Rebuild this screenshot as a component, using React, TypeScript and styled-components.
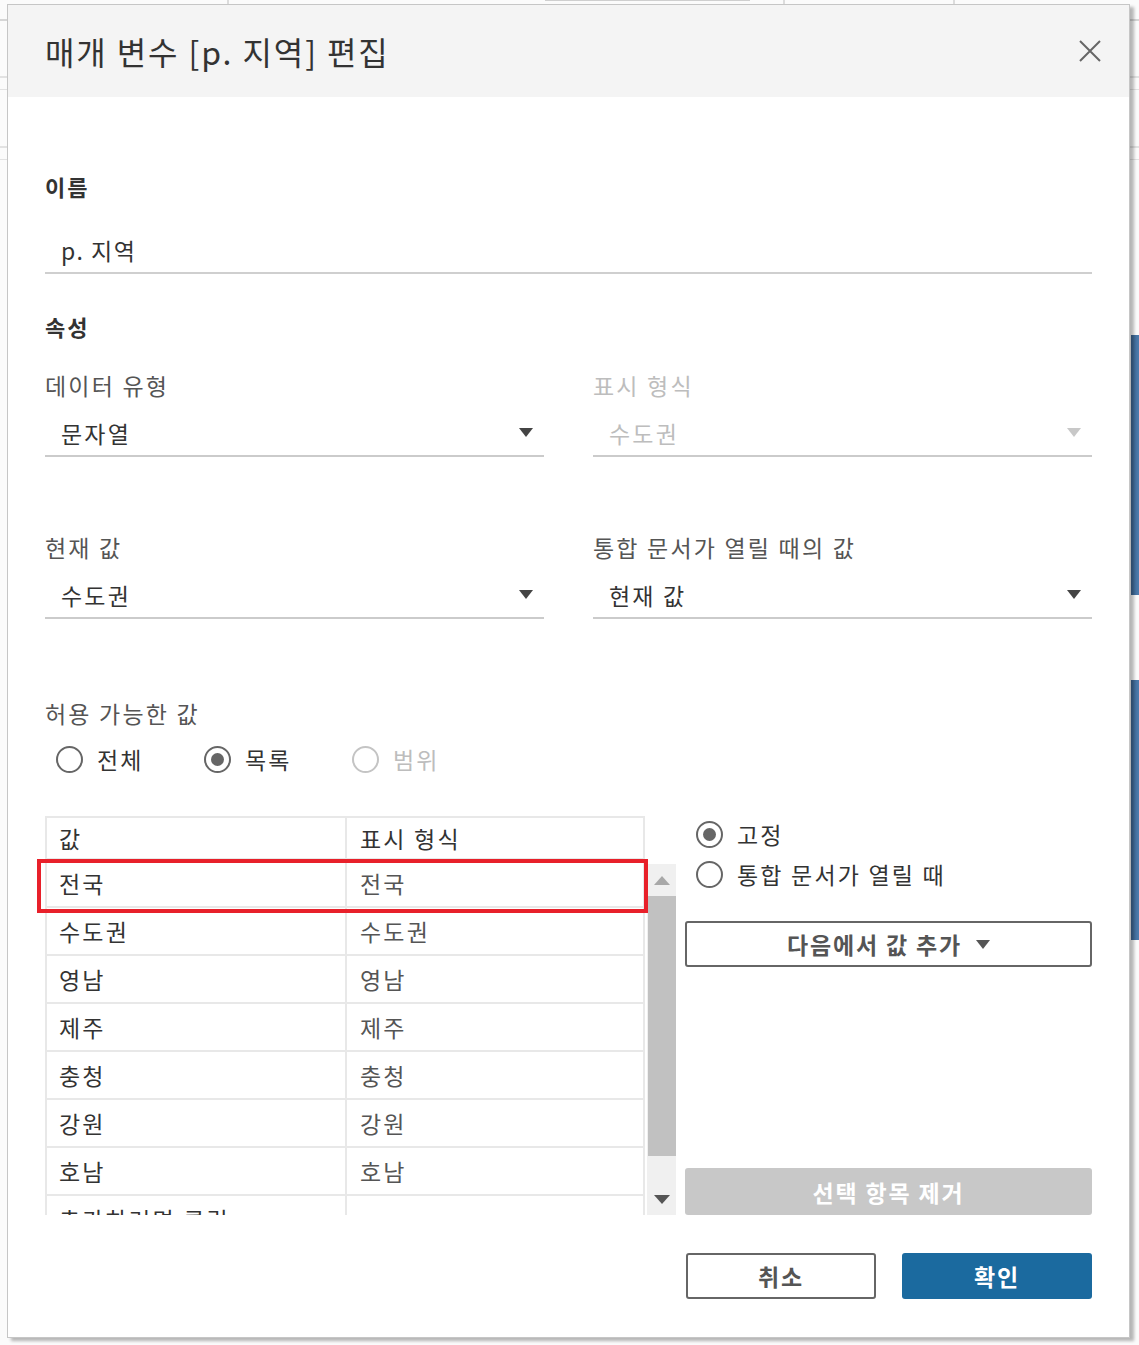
import React from "react";
import styled, { createGlobalStyle } from "styled-components";

const GlobalStyle = createGlobalStyle`
  html, body {
    margin: 0;
    padding: 0;
  }
  body {
    font-family: "Noto Sans CJK KR", "Noto Sans", sans-serif;
    color: #333;
  }
`;

const rows = ["전국", "수도권", "영남", "제주", "충청", "강원", "호남"];

const Caret = ({ color = "#444" }: { color?: string }) => (
  <svg width="14" height="9" viewBox="0 0 14 9">
    <polygon points="0,0 14,0 7,9" fill={color} />
  </svg>
);

const App = () => {
  return (
    <Page>
      <GlobalStyle />
      <Dialog>
        <Header>
          <Title>매개 변수 [p. 지역] 편집</Title>
          <CloseBtn aria-label="닫기">
            <svg width="22" height="22" viewBox="0 0 22 22">
              <path d="M1 1 L21 21 M21 1 L1 21" stroke="#666" strokeWidth="2" fill="none" />
            </svg>
          </CloseBtn>
        </Header>
        <Body>
          <SectionTitle $top={74}>이름</SectionTitle>
          <TextInput>p. 지역</TextInput>

          <SectionTitle $top={37}>속성</SectionTitle>
          <TwoCol $top={29}>
            <Field>
              <FieldLabel>데이터 유형</FieldLabel>
              <Select>
                <span>문자열</span>
                <Caret />
              </Select>
            </Field>
            <Field>
              <FieldLabel $disabled>표시 형식</FieldLabel>
              <Select $disabled>
                <span>수도권</span>
                <Caret color="#c8c8c8" />
              </Select>
            </Field>
          </TwoCol>
          <TwoCol $top={75}>
            <Field>
              <FieldLabel>현재 값</FieldLabel>
              <Select>
                <span>수도권</span>
                <Caret />
              </Select>
            </Field>
            <Field>
              <FieldLabel>통합 문서가 열릴 때의 값</FieldLabel>
              <Select>
                <span>현재 값</span>
                <Caret />
              </Select>
            </Field>
          </TwoCol>

          <FieldLabel $top={79}>허용 가능한 값</FieldLabel>
          <RadioRow>
            <RadioOpt $width={148}>
              <RadioDot />
              전체
            </RadioOpt>
            <RadioOpt $width={148}>
              <RadioDot $checked />
              목록
            </RadioOpt>
            <RadioOpt $disabled>
              <RadioDot $disabled />
              범위
            </RadioOpt>
          </RadioRow>

          <ListArea>
            <TableWrap>
              <TableFrame>
                <HeadRow>
                  <Cell>값</Cell>
                  <Cell $second>표시 형식</Cell>
                </HeadRow>
                {rows.map((r) => (
                  <Row key={r}>
                    <Cell>{r}</Cell>
                    <Cell $second $muted>
                      {r}
                    </Cell>
                  </Row>
                ))}
                <Row>
                  <Cell>추가하려면 클릭</Cell>
                  <Cell $second />
                </Row>
              </TableFrame>
              <Scrollbar>
                <ScrollArrow>
                  <svg width="16" height="9" viewBox="0 0 16 9">
                    <polygon points="0,9 16,9 8,0" fill="#a8a8a8" />
                  </svg>
                </ScrollArrow>
                <Thumb />
                <Track />
                <ScrollArrow>
                  <svg width="16" height="9" viewBox="0 0 16 9">
                    <polygon points="0,0 16,0 8,9" fill="#555" />
                  </svg>
                </ScrollArrow>
              </Scrollbar>
              <Highlight />
            </TableWrap>

            <SideCol>
              <RadioOpt $top={3}>
                <RadioDot $checked />
                고정
              </RadioOpt>
              <RadioOpt $top={10}>
                <RadioDot />
                통합 문서가 열릴 때
              </RadioOpt>
              <OutlineButton $top={32} $full>
                다음에서 값 추가
                <Caret color="#555" />
              </OutlineButton>
              <GreyButton>선택 항목 제거</GreyButton>
            </SideCol>
          </ListArea>

          <Footer>
            <OutlineButton>취소</OutlineButton>
            <PrimaryButton>확인</PrimaryButton>
          </Footer>
        </Body>
      </Dialog>
    </Page>
  );
};

export default App;

const Page = styled.div`
  width: 1139px;
  height: 1345px;
  overflow: hidden;
  box-sizing: border-box;
  padding: 4px 0 0 7px;
  background:
    linear-gradient(90deg, #3c6592, #4c7cad) right 0 top 335px / 8px 260px no-repeat,
    linear-gradient(90deg, #3c6592, #4c7cad) right 0 top 680px / 8px 260px no-repeat,
    linear-gradient(#d6d6d6, #d6d6d6) 0 19px / 100% 2px no-repeat,
    linear-gradient(#e2e2e2, #e2e2e2) 0 76px / 100% 2px no-repeat,
    linear-gradient(#e2e2e2, #e2e2e2) 0 89px / 100% 1px no-repeat,
    linear-gradient(#e2e2e2, #e2e2e2) 0 146px / 100% 2px no-repeat,
    linear-gradient(#e2e2e2, #e2e2e2) 0 159px / 100% 1px no-repeat,
    linear-gradient(#dcdcdc, #dcdcdc) 227px 0 / 2px 4px no-repeat,
    linear-gradient(#dcdcdc, #dcdcdc) 783px 0 / 2px 4px no-repeat,
    linear-gradient(#dcdcdc, #dcdcdc) 953px 0 / 2px 4px no-repeat,
    linear-gradient(#cfcfcf, #cfcfcf) 545px 0 / 205px 1px no-repeat,
    #fbfbfb;
`;

const Dialog = styled.div`
  width: 1123px;
  box-sizing: border-box;
  background: #fff;
  border: 1px solid #c6c6c6;
  box-shadow: 4px 3px 3px rgba(0, 0, 0, 0.28);
`;

const Header = styled.div`
  height: 92px;
  background: #f4f4f4;
  display: flex;
  align-items: center;
  justify-content: space-between;
  padding: 0 28px 0 37px;
`;

const Title = styled.div`
  font-size: 32px;
  color: #333;
  letter-spacing: 1.9px;
`;

const CloseBtn = styled.button`
  border: 0;
  background: none;
  padding: 0;
  width: 22px;
  height: 22px;
  display: flex;
  cursor: pointer;
`;

const Body = styled.div`
  padding: 0 37px 38px 37px;
`;

const SectionTitle = styled.div<{ $top: number }>`
  margin-top: ${(p) => p.$top}px;
  font-size: 22px;
  font-weight: 700;
  line-height: 30px;
  letter-spacing: 2px;
  color: #333;
`;

const TextInput = styled.div`
  margin-top: 27px;
  height: 44px;
  line-height: 44px;
  padding-left: 16px;
  font-size: 23px;
  letter-spacing: 1.5px;
  color: #333;
  border-bottom: 2px solid #cfcfcf;
`;

const TwoCol = styled.div<{ $top: number }>`
  margin-top: ${(p) => p.$top}px;
  display: grid;
  grid-template-columns: 1fr 1fr;
  column-gap: 49px;
`;

const Field = styled.div`
  display: flex;
  flex-direction: column;
`;

const FieldLabel = styled.div<{ $disabled?: boolean; $top?: number }>`
  margin-top: ${(p) => p.$top ?? 0}px;
  font-size: 23px;
  line-height: 30px;
  letter-spacing: 2.2px;
  color: ${(p) => (p.$disabled ? "#bdbdbd" : "#555")};
`;

const Select = styled.div<{ $disabled?: boolean }>`
  margin-top: 10px;
  height: 45px;
  display: flex;
  align-items: center;
  justify-content: space-between;
  padding: 0 11px 0 16px;
  font-size: 23px;
  letter-spacing: 2.2px;
  color: ${(p) => (p.$disabled ? "#bdbdbd" : "#333")};
  border-bottom: 2px solid #cbcbcb;
`;

const RadioRow = styled.div`
  margin-top: 16px;
  display: flex;
  padding-left: 11px;
`;

const RadioOpt = styled.div<{ $width?: number; $disabled?: boolean; $top?: number }>`
  margin-top: ${(p) => p.$top ?? 0}px;
  width: ${(p) => (p.$width ? `${p.$width}px` : "auto")};
  height: 30px;
  display: flex;
  align-items: center;
  gap: 14px;
  font-size: 23px;
  letter-spacing: 2.2px;
  color: ${(p) => (p.$disabled ? "#bdbdbd" : "#333")};
`;

const RadioDot = styled.span<{ $checked?: boolean; $disabled?: boolean }>`
  width: 27px;
  height: 27px;
  box-sizing: border-box;
  border-radius: 50%;
  border: 2px solid ${(p) => (p.$disabled ? "#c4c4c4" : "#666")};
  display: flex;
  align-items: center;
  justify-content: center;
  flex-shrink: 0;

  &::after {
    content: "";
    width: 13px;
    height: 13px;
    border-radius: 50%;
    background: #666;
    display: ${(p) => (p.$checked ? "block" : "none")};
  }
`;

const ListArea = styled.div`
  margin-top: 42px;
  display: grid;
  grid-template-columns: 631px 1fr;
  column-gap: 9px;
  height: 399px;
`;

const TableWrap = styled.div`
  position: relative;
  display: flex;
  align-items: flex-start;
  gap: 2px;
`;

const TableFrame = styled.div`
  width: 600px;
  height: 399px;
  overflow: hidden;
  box-sizing: border-box;
  border-left: 2px solid #e8e8e8;
  border-right: 2px solid #e8e8e8;
`;

const HeadRow = styled.div`
  height: 44px;
  box-sizing: border-box;
  border-top: 2px solid #e8e8e8;
  border-bottom: 2px solid #e8e8e8;
  display: grid;
  grid-template-columns: 298px 1fr;
`;

const Row = styled.div`
  height: 48px;
  box-sizing: border-box;
  border-bottom: 2px solid #e8e8e8;
  display: grid;
  grid-template-columns: 298px 1fr;
`;

const Cell = styled.div<{ $second?: boolean; $muted?: boolean }>`
  display: flex;
  align-items: center;
  padding-left: ${(p) => (p.$second ? 13 : 12)}px;
  font-size: 23px;
  letter-spacing: 2.2px;
  color: ${(p) => (p.$muted ? "#555" : "#333")};
  border-left: ${(p) => (p.$second ? "2px solid #e8e8e8" : "none")};
  white-space: nowrap;
`;

const Scrollbar = styled.div`
  margin-top: 48px;
  width: 29px;
  height: 351px;
  background: #f0f0f0;
  display: flex;
  flex-direction: column;
`;

const ScrollArrow = styled.div`
  height: 32px;
  display: flex;
  align-items: center;
  justify-content: center;
`;

const Thumb = styled.div`
  height: 260px;
  margin-left: 1px;
  background: #c1c1c1;
`;

const Track = styled.div`
  flex: 1;
`;

const Highlight = styled.div`
  position: absolute;
  left: -8px;
  top: 43px;
  width: 611px;
  height: 54px;
  box-sizing: border-box;
  border: 4px solid #e8202a;
  pointer-events: none;
`;

const SideCol = styled.div`
  display: flex;
  flex-direction: column;

  & > ${RadioOpt} {
    padding-left: 11px;
  }
`;

const BaseButton = styled.button<{ $top?: number; $full?: boolean }>`
  margin-top: ${(p) => p.$top ?? 0}px;
  height: 46px;
  width: ${(p) => (p.$full ? "100%" : "190px")};
  box-sizing: border-box;
  border-radius: 3px;
  font-family: "Noto Sans CJK KR", "Noto Sans", sans-serif;
  font-size: 23px;
  font-weight: 700;
  letter-spacing: 1.8px;
  display: flex;
  align-items: center;
  justify-content: center;
  gap: 14px;
  padding: 0;
  cursor: pointer;
`;

const OutlineButton = styled(BaseButton)`
  background: #fff;
  border: 2px solid #666;
  color: #555;
`;

const GreyButton = styled(BaseButton)`
  margin-top: auto;
  width: 100%;
  height: 47px;
  background: #c8c8c8;
  border: 0;
  color: #fff;
`;

const PrimaryButton = styled(BaseButton)`
  background: #1b6a9f;
  border: 0;
  color: #fff;
`;

const Footer = styled.div`
  margin-top: 38px;
  display: flex;
  justify-content: flex-end;
  gap: 26px;
`;
